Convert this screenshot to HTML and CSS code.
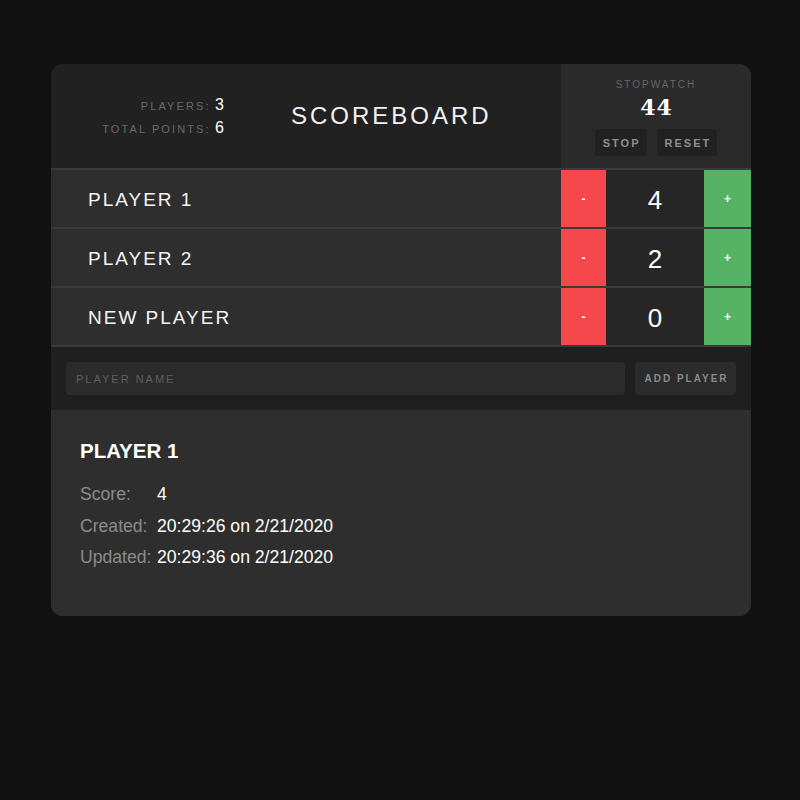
FILE: index.html
```html
<!DOCTYPE html>
<html>
<head>
<meta charset="utf-8">
<link rel="stylesheet" href="styles.css">
</head>
<body>
<div class="card">
  <div class="header">
    <div class="header-main">
      <div class="stats">
        <div class="stat"><span class="stat-label">PLAYERS:</span> <span class="stat-value">3</span></div>
        <div class="stat"><span class="stat-label">TOTAL POINTS:</span> <span class="stat-value">6</span></div>
      </div>
      <h1 class="title">SCOREBOARD</h1>
    </div>
    <div class="stopwatch">
      <div class="sw-label">STOPWATCH</div>
      <div class="sw-time">44</div>
      <div class="sw-buttons">
        <button class="sw-btn">STOP</button>
        <button class="sw-btn">RESET</button>
      </div>
    </div>
  </div>
  <div class="player">
    <div class="player-name">PLAYER 1</div>
    <div class="counter">
      <button class="btn-dec">-</button>
      <div class="score">4</div>
      <button class="btn-inc">+</button>
    </div>
  </div>
  <div class="player">
    <div class="player-name">PLAYER 2</div>
    <div class="counter">
      <button class="btn-dec">-</button>
      <div class="score">2</div>
      <button class="btn-inc">+</button>
    </div>
  </div>
  <div class="player">
    <div class="player-name">NEW PLAYER</div>
    <div class="counter">
      <button class="btn-dec">-</button>
      <div class="score">0</div>
      <button class="btn-inc">+</button>
    </div>
  </div>
  <form class="add-form">
    <input class="name-input" type="text" placeholder="PLAYER NAME">
    <button class="add-btn" type="button">ADD PLAYER</button>
  </form>
  <div class="details">
    <h2 class="details-title">PLAYER 1</h2>
    <div class="detail-row"><span class="detail-label">Score:</span><span class="detail-value">4</span></div>
    <div class="detail-row"><span class="detail-label">Created:</span><span class="detail-value">20:29:26 on 2/21/2020</span></div>
    <div class="detail-row"><span class="detail-label">Updated:</span><span class="detail-value">20:29:36 on 2/21/2020</span></div>
  </div>
</div>
</body>
</html>
```

FILE: styles.css
```css
* { box-sizing: border-box; }
body {
  margin: 0;
  background: #111111;
  font-family: "Liberation Sans", Arial, sans-serif;
  color: #fff;
  height: 800px;
}
.card {
  width: 700px;
  margin: 64px 0 0 51px;
  border-radius: 12px;
  overflow: hidden;
  background: #2e2e2e;
}
.header {
  display: flex;
  height: 106px;
  border-bottom: 2px solid #3a3a3a;
}
.header-main {
  flex: 1;
  display: flex;
  align-items: center;
  background: #212121;
}
.stats {
  width: 173px;
  text-align: right;
  padding-top: 1px;
}
.stat {
  line-height: 22px;
}
.stat-label {
  font-size: 11px;
  letter-spacing: 2.1px;
  color: #6a6a6a;
}
.stat-value {
  font-size: 16px;
  color: #fff;
}
.title {
  margin: 0 0 0 67px;
  font-size: 24px;
  font-weight: normal;
  letter-spacing: 3px;
  color: #f2f2f2;
}
.stopwatch {
  width: 190px;
  background: #2a2a2a;
  display: flex;
  flex-direction: column;
  align-items: center;
  padding-top: 15px;
}
.sw-label {
  font-size: 10px;
  letter-spacing: 2px;
  color: #666;
  line-height: 12px;
}
.sw-time {
  font-family: "DejaVu Serif", serif;
  font-weight: bold;
  font-size: 22px;
  line-height: 28px;
  letter-spacing: 1px;
  color: #fff;
  margin-top: 2px;
  padding-left: 1px;
}
.sw-buttons {
  display: flex;
  gap: 10px;
  margin-top: 8px;
}
.sw-btn {
  font-family: "Liberation Sans", Arial, sans-serif;
  background: #212121;
  border: none;
  border-radius: 4px;
  color: #8f8f8f;
  font-weight: bold;
  font-size: 11px;
  letter-spacing: 2px;
  height: 27px;
  padding: 0 6px 0 8px;
}
.player {
  display: flex;
  height: 59px;
  border-bottom: 2px solid #3a3a3a;
  background: #2e2e2e;
}
.player-name {
  flex: 1;
  display: flex;
  align-items: center;
  padding: 3px 0 0 37px;
  font-size: 19px;
  letter-spacing: 2px;
  color: #f5f5f5;
}
.counter {
  width: 190px;
  display: flex;
}
.btn-dec, .btn-inc {
  border: none;
  color: #fff;
  font-family: "Liberation Sans", Arial, sans-serif;
  font-size: 12px;
  font-weight: bold;
  padding: 0;
}
.btn-dec {
  width: 45px;
  background: #f6484c;
}
.btn-inc {
  width: 47px;
  background: #56b265;
}
.score {
  flex: 1;
  background: #262626;
  display: flex;
  align-items: center;
  justify-content: center;
  padding-top: 3px;
  font-size: 26px;
  color: #fff;
}
.add-form {
  display: flex;
  gap: 10px;
  margin: 0;
  padding: 15px 15px 15px 15px;
  background: #1f1f1f;
  height: 63px;
}
.name-input {
  flex: 1;
  height: 33px;
  background: #2b2b2b;
  border: none;
  border-radius: 4px;
  padding: 0 10px;
  font-family: "Liberation Sans", Arial, sans-serif;
  font-size: 11px;
  letter-spacing: 2px;
  color: #fff;
  outline: none;
}
.name-input::placeholder {
  color: #5f5f5f;
}
.add-btn {
  width: 101px;
  height: 33px;
  background: #2b2b2b;
  border: none;
  border-radius: 4px;
  font-family: "Liberation Sans", Arial, sans-serif;
  font-size: 10px;
  font-weight: bold;
  letter-spacing: 2px;
  color: #8a8a8a;
  padding: 0 0 0 2px;
}
.details {
  background: #2e2e2e;
  padding: 28px 29px 40px;
  height: 206px;
}
.details-title {
  margin: 0 0 15px;
  font-size: 20.5px;
  font-weight: bold;
  line-height: 26px;
}
.detail-row {
  display: flex;
  font-size: 17.6px;
  line-height: 31.5px;
}
.detail-label {
  width: 77px;
  color: #8c8c8c;
}
.detail-value {
  color: #fff;
}
```
